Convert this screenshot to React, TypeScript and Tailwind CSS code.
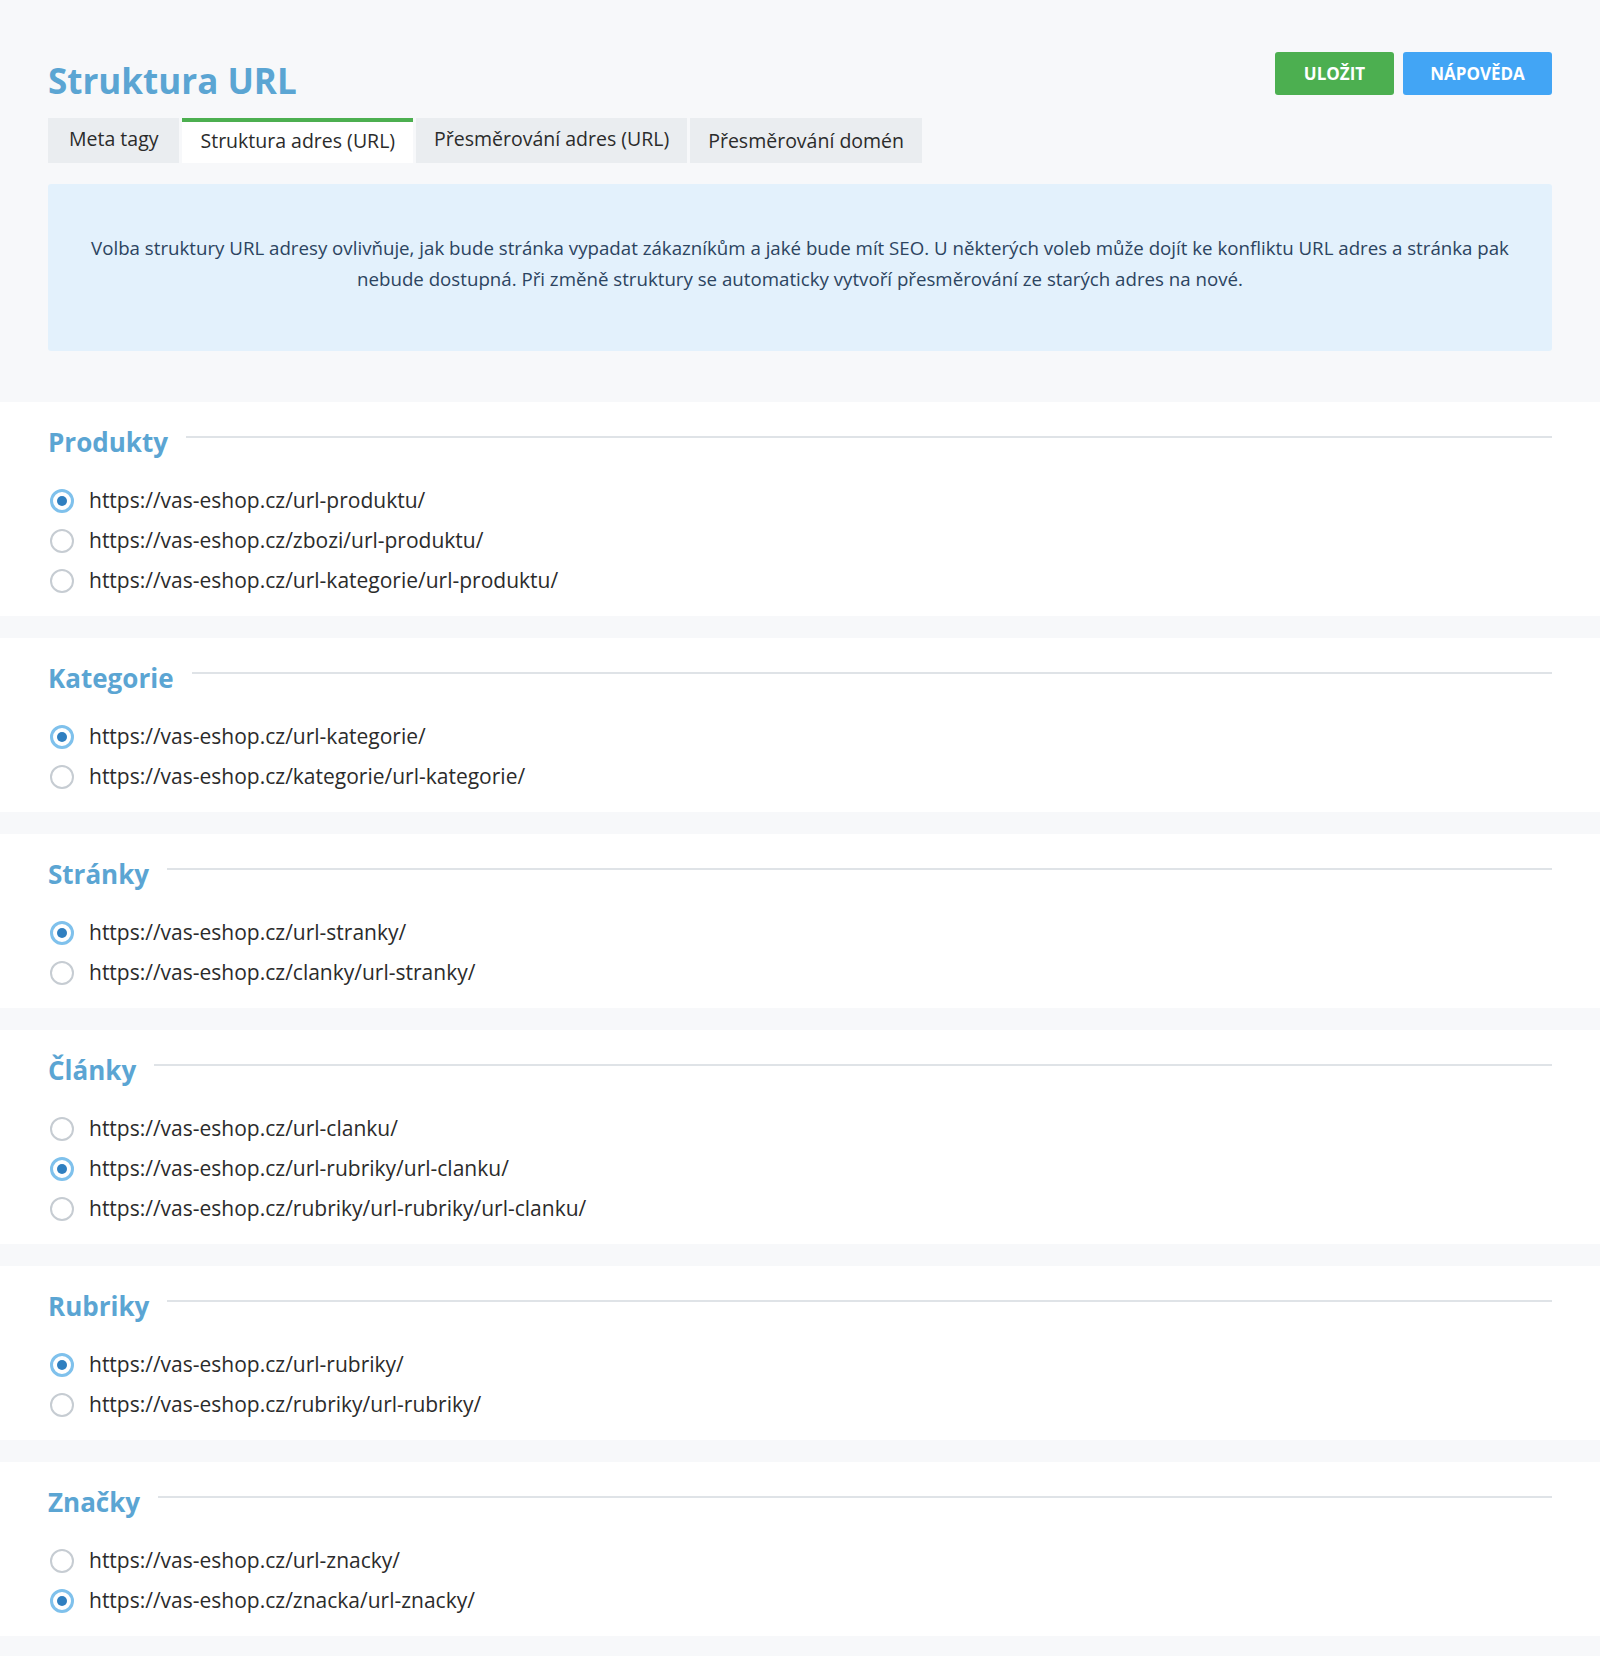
import React, { useState } from 'react';

type Group = {
  title: string;
  options: string[];
  selected: number;
};

const groups: Group[] = [
  {
    title: 'Produkty',
    options: [
      'https://vas-eshop.cz/url-produktu/',
      'https://vas-eshop.cz/zbozi/url-produktu/',
      'https://vas-eshop.cz/url-kategorie/url-produktu/',
    ],
    selected: 0,
  },
  {
    title: 'Kategorie',
    options: ['https://vas-eshop.cz/url-kategorie/', 'https://vas-eshop.cz/kategorie/url-kategorie/'],
    selected: 0,
  },
  {
    title: 'Stránky',
    options: ['https://vas-eshop.cz/url-stranky/', 'https://vas-eshop.cz/clanky/url-stranky/'],
    selected: 0,
  },
  {
    title: 'Články',
    options: [
      'https://vas-eshop.cz/url-clanku/',
      'https://vas-eshop.cz/url-rubriky/url-clanku/',
      'https://vas-eshop.cz/rubriky/url-rubriky/url-clanku/',
    ],
    selected: 1,
  },
  {
    title: 'Rubriky',
    options: ['https://vas-eshop.cz/url-rubriky/', 'https://vas-eshop.cz/rubriky/url-rubriky/'],
    selected: 0,
  },
  {
    title: 'Značky',
    options: ['https://vas-eshop.cz/url-znacky/', 'https://vas-eshop.cz/znacka/url-znacky/'],
    selected: 1,
  },
];

const tabs = ['Meta tagy', 'Struktura adres (URL)', 'Přesměrování adres (URL)', 'Přesměrování domén'];

function Radio({ checked }: { checked: boolean }) {
  if (checked) {
    return (
      <span className="flex h-[24px] w-[24px] shrink-0 items-center justify-center rounded-full border-[3px] border-[#7fc1ec] bg-white">
        <span className="h-[10px] w-[10px] rounded-full bg-[#2f7fc0]" />
      </span>
    );
  }
  return <span className="h-[24px] w-[24px] shrink-0 rounded-full border-[2.5px] border-[#c6ccd2] bg-white" />;
}

function Section({ group }: { group: Group }) {
  const [selected, setSelected] = useState(group.selected);

  return (
    <section className="bg-white px-[48px] pt-[24px] pb-[15px]">
      <div className="flex items-center">
        <h2 className="text-[26px] font-bold leading-[32px] text-[#5ba5d3]">{group.title}</h2>
        <div className="mb-[10px] ml-[18px] h-[2px] flex-1 bg-[#dfe3e7]" />
      </div>
      <div className="mt-[23px] flex flex-col">
        {group.options.map((url, i) => (
          <label
            key={url}
            className="flex h-[40px] cursor-pointer items-center gap-[15px] pl-[2px]"
            onClick={() => setSelected(i)}
          >
            <Radio checked={selected === i} />
            <span className="text-[21px] text-[#2b2b2b]">{url}</span>
          </label>
        ))}
      </div>
    </section>
  );
}

export default function App() {
  const [activeTab, setActiveTab] = useState(1);

  return (
    <div className="min-h-screen bg-[#f7f8fa] pb-[20px] font-['Open_Sans',sans-serif]">
      <div className="px-[48px] pt-[52px] pb-[51px]">
        <div className="flex items-start justify-between">
          <h1 className="mt-[6px] text-[35px] font-bold leading-[46px] text-[#5ba5d3]">Struktura URL</h1>
          <div className="flex gap-[9px]">
            <button className="h-[43px] w-[119px] rounded-[3px] bg-[#4caf50] text-[17px] font-bold text-white">
              ULOŽIT
            </button>
            <button className="h-[43px] w-[149px] rounded-[3px] bg-[#42a5f5] text-[17px] font-bold text-white">
              NÁPOVĚDA
            </button>
          </div>
        </div>

        <div className="mt-[14px] flex gap-[3px]">
          {tabs.map((t, i) => (
            <button
              key={t}
              onClick={() => setActiveTab(i)}
              className={
                i === activeTab
                  ? 'h-[45px] border-t-[4px] border-[#4caf50] bg-white px-[18px] pb-[4px] text-[19.5px] text-[#2b2b2b]'
                  : i === 0
                    ? 'h-[45px] bg-[#eaedf0] px-[21px] pb-[4px] text-[19.5px] text-[#2b2b2b]'
                    : i === 3
                      ? 'h-[45px] bg-[#eaedf0] px-[18px] text-[19.5px] text-[#2b2b2b]'
                      : 'h-[45px] bg-[#eaedf0] px-[18px] pb-[4px] text-[19.5px] text-[#2b2b2b]'
              }
            >
              {t}
            </button>
          ))}
        </div>

        <div className="mt-[21px] rounded-[3px] bg-[#e3f1fc] px-[36px] pt-[48px] pb-[57px] text-center text-[18.7px] leading-[31px] text-[#2c4460]">
          Volba struktury URL adresy ovlivňuje, jak bude stránka vypadat zákazníkům a jaké bude mít SEO. U některých voleb
          může dojít ke konfliktu URL adres a stránka pak nebude dostupná. Při změně struktury se automaticky vytvoří
          přesměrování ze starých adres na nové.
        </div>
      </div>

      <div className="flex flex-col gap-[22px]">
        {groups.map((g) => (
          <Section key={g.title} group={g} />
        ))}
      </div>
    </div>
  );
}
